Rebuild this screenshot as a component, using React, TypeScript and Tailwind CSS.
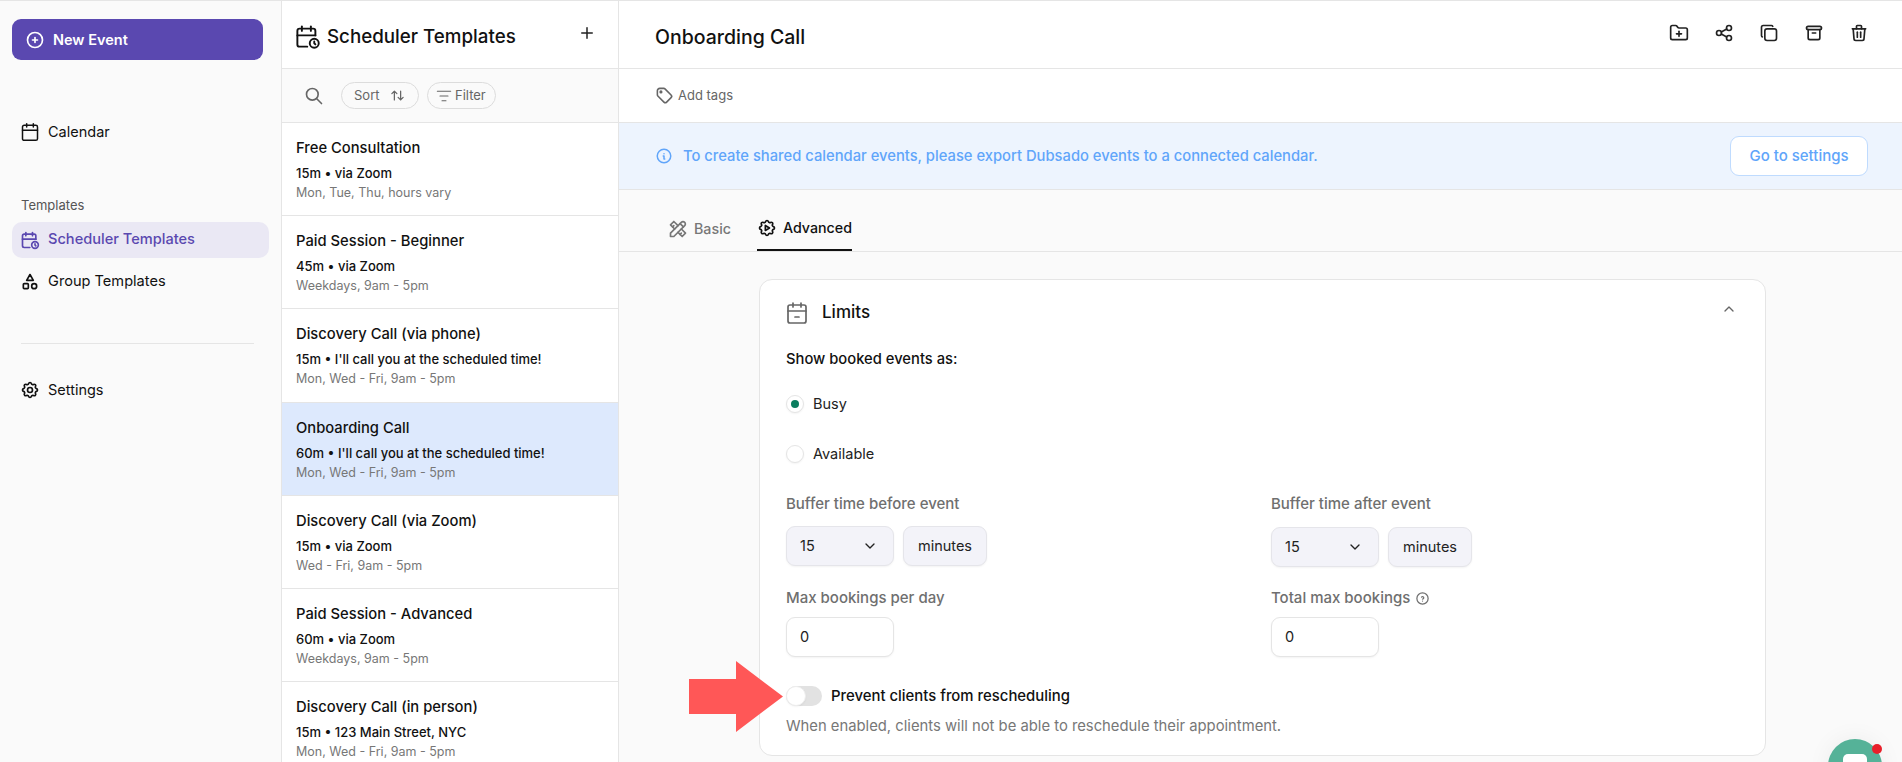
import { Calendar, CalendarMinus2, FolderPlus, ListFilter } from "lucide-react";
import {
  TbArchive,
  TbArrowsSort,
  TbCalendarTime,
  TbChevronDown,
  TbChevronUp,
  TbCirclePlus,
  TbCopy,
  TbHelpCircle,
  TbInfoCircle,
  TbPlus,
  TbSearch,
  TbSettings,
  TbSettingsAutomation,
  TbShare,
  TbTag,
  TbTools,
  TbTrash,
  TbTriangleSquareCircle
} from "react-icons/tb";

const templates = [
  { name: "Free Consultation", info: "15m • via Zoom", hours: "Mon, Tue, Thu, hours vary" },
  { name: "Paid Session - Beginner", info: "45m • via Zoom", hours: "Weekdays, 9am - 5pm" },
  { name: "Discovery Call (via phone)", info: "15m • I'll call you at the scheduled time!", hours: "Mon, Wed - Fri, 9am - 5pm" },
  { name: "Onboarding Call", info: "60m • I'll call you at the scheduled time!", hours: "Mon, Wed - Fri, 9am - 5pm", active: true },
  { name: "Discovery Call (via Zoom)", info: "15m • via Zoom", hours: "Wed - Fri, 9am - 5pm" },
  { name: "Paid Session - Advanced", info: "60m • via Zoom", hours: "Weekdays, 9am - 5pm" },
  { name: "Discovery Call (in person)", info: "15m • 123 Main Street, NYC", hours: "Mon, Wed - Fri, 9am - 5pm" }
];

const Sidebar = () => (
  <aside className="flex w-[282px] shrink-0 flex-col border-r border-[#e5e5e5] bg-[#fafafa] px-3 pt-[18px]">
    <button className="flex h-[41px] w-[251px] items-center gap-[8px] rounded-[9px] bg-[#5a48b0] pl-[13px] text-[14.5px] font-semibold text-white">
      <TbCirclePlus size={20} />
      New Event
    </button>
    <div className="mt-[54px] flex h-[36px] items-center gap-[8px] pl-[8px] text-[14.5px] text-[#111]">
      <Calendar size={20} strokeWidth={1.8} />
      Calendar
    </div>
    <div className="mt-[46px] h-[19px] pl-[9px] text-[13px] leading-[19px] text-[#555]">Templates</div>
    <div className="mt-[7px] flex h-[36px] items-center gap-[8px] rounded-[10px] bg-[#eae8f4] pl-[8px] text-[14.6px] font-medium text-[#5a48b0]">
      <TbCalendarTime size={20} />
      Scheduler Templates
    </div>
    <div className="mt-[6px] flex h-[36px] items-center gap-[8px] pl-[8px] text-[14.6px] text-[#111]">
      <TbTriangleSquareCircle size={20} />
      Group Templates
    </div>
    <div className="ml-[9px] mt-[43px] h-px w-[233px] bg-[#e5e5e5]" />
    <div className="mt-[28px] flex h-[36px] items-center gap-[8px] pl-[8px] text-[14.5px] text-[#111]">
      <TbSettings size={20} />
      Settings
    </div>
  </aside>
);

const TemplateList = () => (
  <section className="flex w-[337px] shrink-0 flex-col border-r border-[#e5e5e5] bg-white">
    <div className="flex h-[68px] shrink-0 items-center justify-between border-b border-[#e5e5e5] pl-[12px] pr-[22px] pt-[6px]">
      <div className="flex items-center gap-[6px] text-[18.75px] font-medium text-[#111]">
        <TbCalendarTime size={27} strokeWidth={1.7} className="mb-[2px]" />
        Scheduler Templates
      </div>
      <TbPlus size={18} className="mb-[9px] text-[#222]" />
    </div>
    <div className="flex h-[54px] shrink-0 items-center border-b border-[#e5e5e5] bg-[#fafafa] pl-[22px] text-[13px] text-[#666]">
      <TbSearch size={20} className="mr-[17px] text-[#666]" />
      <div className="mr-[8px] flex h-[27px] w-[78px] items-center gap-[10px] rounded-full border border-[#dcdcdc] pl-[12px]">
        Sort
        <TbArrowsSort size={15} />
      </div>
      <div className="flex h-[27px] w-[69px] items-center gap-[3px] rounded-full border border-[#dcdcdc] pl-[8px]">
        <ListFilter size={16} strokeWidth={1.6} />
        Filter
      </div>
    </div>
    {templates.map(t => (
      <div
        key={t.name}
        className={`flex h-[93.2px] shrink-0 flex-col border-b border-[#e5e5e5] pl-[14px] pt-[14px] ${t.active ? "bg-[#dde9fd]" : "bg-white"}`}>
        <div className="text-[14.75px] font-medium leading-[22px] text-[#111]">{t.name}</div>
        <div className="mt-[4px] text-[13px] font-medium leading-[20px] text-[#111]">{t.info}</div>
        <div className="text-[12.5px] leading-[20px] text-[#777]">{t.hours}</div>
      </div>
    ))}
  </section>
);

const DurationField = ({ label, className, gapClassName }: { label: string; className?: string; gapClassName: string }) => (
  <div className={className}>
    <div className="h-[20px] text-[15px] font-medium leading-[20px] text-[#6f6f6f]">{label}</div>
    <div className={`${gapClassName} flex gap-[9px] text-[14.5px] text-[#222]`}>
      <div className="flex h-[40px] w-[108px] items-center justify-between rounded-[9px] border border-[#e5e5ea] bg-[#f3f3f9] pl-[13px] pr-[15px] shadow-xs">
        15
        <TbChevronDown size={16} />
      </div>
      <div className="flex h-[40px] w-[84px] items-center justify-center rounded-[9px] border border-[#e5e5ea] bg-[#f3f3f9] shadow-xs">
        minutes
      </div>
    </div>
  </div>
);

const CountField = ({ label, help }: { label: string; help?: boolean }) => (
  <div>
    <div className="flex h-[20px] items-center gap-[5px] text-[15px] font-medium leading-[20px] text-[#6f6f6f]">
      {label}
      {help && <TbHelpCircle size={15} />}
    </div>
    <div className="mt-[9px] flex h-[40px] w-[108px] items-center rounded-[9px] border border-[#e5e5e5] bg-white pl-[13px] text-[14.5px] text-[#222] shadow-xs">
      0
    </div>
  </div>
);

const LimitsCard = () => (
  <div className="ml-[140px] mt-[27px] h-[477px] w-[1007px] shrink-0 rounded-[13px] border border-[#e5e5e5] bg-white pl-[26px] pr-[27px]">
    <div className="flex h-[65px] items-center justify-between pr-[1px]">
      <div className="-ml-[1px] flex items-center gap-[13px] text-[17px] font-medium text-[#111]">
        <CalendarMinus2 size={24} strokeWidth={1.7} className="text-[#666]" />
        Limits
      </div>
      <TbChevronUp size={16} className="mb-[7px] text-[#666]" />
    </div>
    <div className="mt-[4px] h-[20px] text-[14.75px] font-medium leading-[20px] text-[#111]">Show booked events as:</div>
    <div className="mt-[25px] flex h-[20px] items-center gap-[9px] text-[14.5px] text-[#222]">
      <span className="flex size-[18px] items-center justify-center rounded-full border border-[#e5e5e5] bg-white shadow-xs">
        <span className="size-[8px] rounded-full bg-[#0a7d5e]" />
      </span>
      Busy
    </div>
    <div className="mt-[30px] flex h-[20px] items-center gap-[9px] text-[14.5px] text-[#222]">
      <span className="size-[18px] rounded-full border border-[#e5e5e5] bg-white shadow-xs" />
      Available
    </div>
    <div className="mt-[30px] flex">
      <DurationField label="Buffer time before event" className="w-[485px]" gapClassName="mt-[12px]" />
      <DurationField label="Buffer time after event" gapClassName="mt-[13px]" />
    </div>
    <div className="mt-[21px] flex">
      <div className="w-[485px]">
        <CountField label="Max bookings per day" />
      </div>
      <CountField label="Total max bookings" help />
    </div>
    <div className="mt-[29px] flex h-[20px] items-center gap-[9px] text-[14.9px] font-medium text-[#111]">
      <span className="flex h-[20px] w-[36px] items-center rounded-full bg-[#e2e2e2]">
        <span className="size-[20px] rounded-full border border-[#eeeeee] bg-white shadow-xs" />
      </span>
      Prevent clients from rescheduling
    </div>
    <div className="mt-[10px] text-[14.8px] leading-[20px] text-[#777]">
      When enabled, clients will not be able to reschedule their appointment.
    </div>
  </div>
);

const EventDetail = () => (
  <main className="flex min-w-0 flex-1 flex-col bg-[#fafafa]">
    <div className="flex h-[68px] shrink-0 items-center justify-between border-b border-[#e5e5e5] bg-white pl-[36px] pr-[33px] pt-[6px]">
      <div className="text-[19.5px] font-medium text-[#111]">Onboarding Call</div>
      <div className="mb-[9px] flex gap-[25px] text-[#222]">
        <FolderPlus size={20} strokeWidth={2} />
        <TbShare size={20} />
        <TbCopy size={20} />
        <TbArchive size={20} />
        <TbTrash size={20} />
      </div>
    </div>
    <div className="flex h-[54px] shrink-0 items-center gap-[4px] border-b border-[#e5e5e5] bg-white pl-[36px] text-[13px] text-[#666]">
      <TbTag size={19} />
      Add tags
    </div>
    <div className="flex h-[67px] shrink-0 items-center justify-between border-b border-[#e5e5e5] bg-[#edf4fe] pl-[36px] pr-[34px] text-[14.75px] font-medium text-[#60a5fa]">
      <div className="flex items-center gap-[10px]">
        <TbInfoCircle size={18} />
        To create shared calendar events, please export Dubsado events to a connected calendar.
      </div>
      <div className="flex h-[40px] w-[138px] items-center justify-center rounded-[9px] border border-[#bfdbfe] bg-white text-[15px]">
        Go to settings
      </div>
    </div>
    <div className="flex h-[62px] shrink-0 items-stretch gap-[26px] border-b border-[#e5e5e5] pl-[49px] pt-[16px] text-[14.25px] font-medium">
      <div className="flex items-center gap-[6px] text-[#777]">
        <TbTools size={20} />
        Basic
      </div>
      <div className="flex items-center gap-[6px] border-b-2 border-[#111] text-[#111]">
        <TbSettingsAutomation size={20} />
        Advanced
      </div>
    </div>
    <LimitsCard />
  </main>
);

const ChatBubble = () => (
  <div className="absolute left-[1828px] top-[738px] size-[54px] rounded-full bg-[#55b298] shadow-[0_0_24px_rgba(0,0,0,0.06)]">
    <div className="absolute left-[15px] top-[15px] h-[22px] w-[24px] rounded-[5px] bg-white" />
    <div className="absolute left-[44px] top-[5px] size-[10px] rounded-full bg-[#e8202a]" />
  </div>
);

const RedArrow = () => (
  <svg className="absolute left-[689px] top-[660px]" width="95" height="72" viewBox="0 0 95 72">
    <path d="M0 18H47V0L94 35.5L47 71V53H0Z" fill="#ff5757" />
  </svg>
);

export default function App() {
  return (
    <div className="relative flex h-[762px] w-[1902px] overflow-hidden border-t border-[#e5e5e5] font-['Inter',sans-serif]">
      <Sidebar />
      <TemplateList />
      <EventDetail />
      <RedArrow />
      <ChatBubble />
    </div>
  );
}
